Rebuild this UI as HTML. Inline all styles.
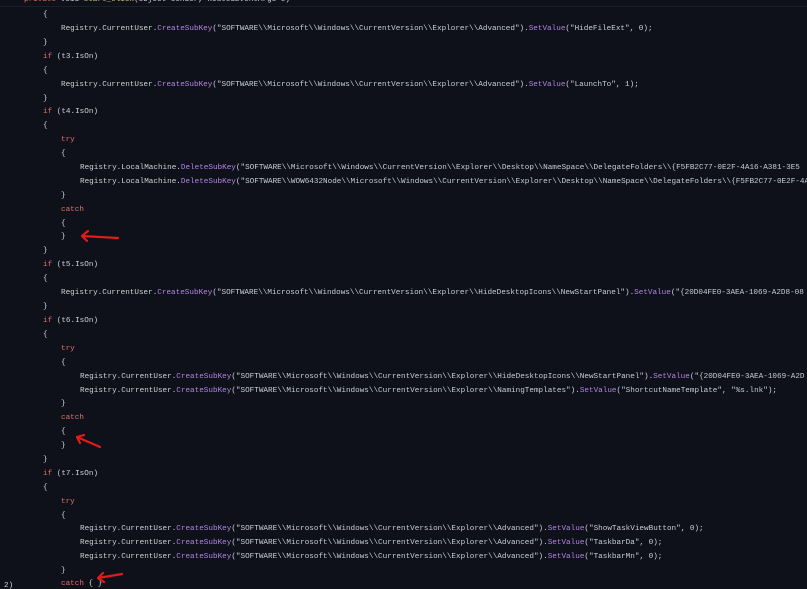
<!DOCTYPE html>
<html><head><meta charset="utf-8"><style>
html,body{margin:0;padding:0;background:#0e1119;width:807px;height:589px;overflow:hidden}
#w{position:absolute;left:0;top:0;width:807px;height:589px;overflow:hidden}
#c{position:absolute;left:0;top:2px;width:807px;height:589px}
.l{position:absolute;white-space:pre;font-family:"Liberation Mono",monospace;font-size:7.65px;line-height:10px;color:#d0d3da}
.k{color:#e0716a}.m{color:#b484e6}.s{color:#c8cdd8}
.sep{position:absolute;left:0;top:6px;width:807px;height:1px;background:#1a1e27}
</style></head><body><div id="w">
<div class="sep"></div>
<div id="c">
<div class="l" style="left:24px;top:-7px"><span class="k">private</span> void <span style="color:#d8c27a">start_Click</span>(object sender, RoutedEventArgs e)</div>
<div class="l" style="left:43px;top:8px">{</div>
<div class="l" style="left:61px;top:22px">Registry.CurrentUser.<span class="m">CreateSubKey</span>(<span class="s">"SOFTWARE\\Microsoft\\Windows\\CurrentVersion\\Explorer\\Advanced"</span>).<span class="m">SetValue</span>(<span class="s">"HideFileExt"</span>, 0);</div>
<div class="l" style="left:43px;top:36px">}</div>
<div class="l" style="left:43px;top:50px"><span class="k">if</span> (t3.IsOn)</div>
<div class="l" style="left:43px;top:64px">{</div>
<div class="l" style="left:61px;top:78px">Registry.CurrentUser.<span class="m">CreateSubKey</span>(<span class="s">"SOFTWARE\\Microsoft\\Windows\\CurrentVersion\\Explorer\\Advanced"</span>).<span class="m">SetValue</span>(<span class="s">"LaunchTo"</span>, 1);</div>
<div class="l" style="left:43px;top:92px">}</div>
<div class="l" style="left:43px;top:105px"><span class="k">if</span> (t4.IsOn)</div>
<div class="l" style="left:43px;top:119px">{</div>
<div class="l" style="left:61px;top:133px"><span class="k">try</span></div>
<div class="l" style="left:61px;top:147px">{</div>
<div class="l" style="left:80px;top:161px">Registry.LocalMachine.<span class="m">DeleteSubKey</span>(<span class="s">"SOFTWARE\\Microsoft\\Windows\\CurrentVersion\\Explorer\\Desktop\\NameSpace\\DelegateFolders\\{F5FB2C77-0E2F-4A16-A381-3E5</span></div>
<div class="l" style="left:80px;top:175px">Registry.LocalMachine.<span class="m">DeleteSubKey</span>(<span class="s">"SOFTWARE\\WOW6432Node\\Microsoft\\Windows\\CurrentVersion\\Explorer\\Desktop\\NameSpace\\DelegateFolders\\{F5FB2C77-0E2F-4A</span></div>
<div class="l" style="left:61px;top:189px">}</div>
<div class="l" style="left:61px;top:203px"><span class="k">catch</span></div>
<div class="l" style="left:61px;top:217px">{</div>
<div class="l" style="left:61px;top:230px">}</div>
<div class="l" style="left:43px;top:244px">}</div>
<div class="l" style="left:43px;top:258px"><span class="k">if</span> (t5.IsOn)</div>
<div class="l" style="left:43px;top:272px">{</div>
<div class="l" style="left:61px;top:286px">Registry.CurrentUser.<span class="m">CreateSubKey</span>(<span class="s">"SOFTWARE\\Microsoft\\Windows\\CurrentVersion\\Explorer\\HideDesktopIcons\\NewStartPanel"</span>).<span class="m">SetValue</span>(<span class="s">"{20D04FE0-3AEA-1069-A2D8-08</span></div>
<div class="l" style="left:43px;top:300px">}</div>
<div class="l" style="left:43px;top:314px"><span class="k">if</span> (t6.IsOn)</div>
<div class="l" style="left:43px;top:328px">{</div>
<div class="l" style="left:61px;top:342px"><span class="k">try</span></div>
<div class="l" style="left:61px;top:356px">{</div>
<div class="l" style="left:80px;top:370px">Registry.CurrentUser.<span class="m">CreateSubKey</span>(<span class="s">"SOFTWARE\\Microsoft\\Windows\\CurrentVersion\\Explorer\\HideDesktopIcons\\NewStartPanel"</span>).<span class="m">SetValue</span>(<span class="s">"{20D04FE0-3AEA-1069-A2D</span></div>
<div class="l" style="left:80px;top:384px">Registry.CurrentUser.<span class="m">CreateSubKey</span>(<span class="s">"SOFTWARE\\Microsoft\\Windows\\CurrentVersion\\Explorer\\NamingTemplates"</span>).<span class="m">SetValue</span>(<span class="s">"ShortcutNameTemplate"</span>, <span class="s">"%s.lnk"</span>);</div>
<div class="l" style="left:61px;top:397px">}</div>
<div class="l" style="left:61px;top:411px"><span class="k">catch</span></div>
<div class="l" style="left:61px;top:425px">{</div>
<div class="l" style="left:61px;top:439px">}</div>
<div class="l" style="left:43px;top:453px">}</div>
<div class="l" style="left:43px;top:467px"><span class="k">if</span> (t7.IsOn)</div>
<div class="l" style="left:43px;top:481px">{</div>
<div class="l" style="left:61px;top:495px"><span class="k">try</span></div>
<div class="l" style="left:61px;top:509px">{</div>
<div class="l" style="left:80px;top:522px">Registry.CurrentUser.<span class="m">CreateSubKey</span>(<span class="s">"SOFTWARE\\Microsoft\\Windows\\CurrentVersion\\Explorer\\Advanced"</span>).<span class="m">SetValue</span>(<span class="s">"ShowTaskViewButton"</span>, 0);</div>
<div class="l" style="left:80px;top:536px">Registry.CurrentUser.<span class="m">CreateSubKey</span>(<span class="s">"SOFTWARE\\Microsoft\\Windows\\CurrentVersion\\Explorer\\Advanced"</span>).<span class="m">SetValue</span>(<span class="s">"TaskbarDa"</span>, 0);</div>
<div class="l" style="left:80px;top:550px">Registry.CurrentUser.<span class="m">CreateSubKey</span>(<span class="s">"SOFTWARE\\Microsoft\\Windows\\CurrentVersion\\Explorer\\Advanced"</span>).<span class="m">SetValue</span>(<span class="s">"TaskbarMn"</span>, 0);</div>
<div class="l" style="left:61px;top:564px">}</div>
<div class="l" style="left:61px;top:577px"><span class="k">catch</span> { }</div>
<div class="l" style="left:4px;top:579px">2)</div>
</div>
<svg width="807" height="589" style="position:absolute;left:0;top:0" fill="none" stroke="#e01b1b" stroke-width="2.2" stroke-linecap="round" stroke-linejoin="round">
<path d="M118 238 L82 236 M82 236 L88 231 M82 236 L87 241"/>
<path d="M100 447 L77 437 M77 437 L84 435 M77 437 L80 443"/>
<path d="M122 574 L98 578 M98 578 L103 573 M98 578 L104 582"/>
</svg>
</div></body></html>
